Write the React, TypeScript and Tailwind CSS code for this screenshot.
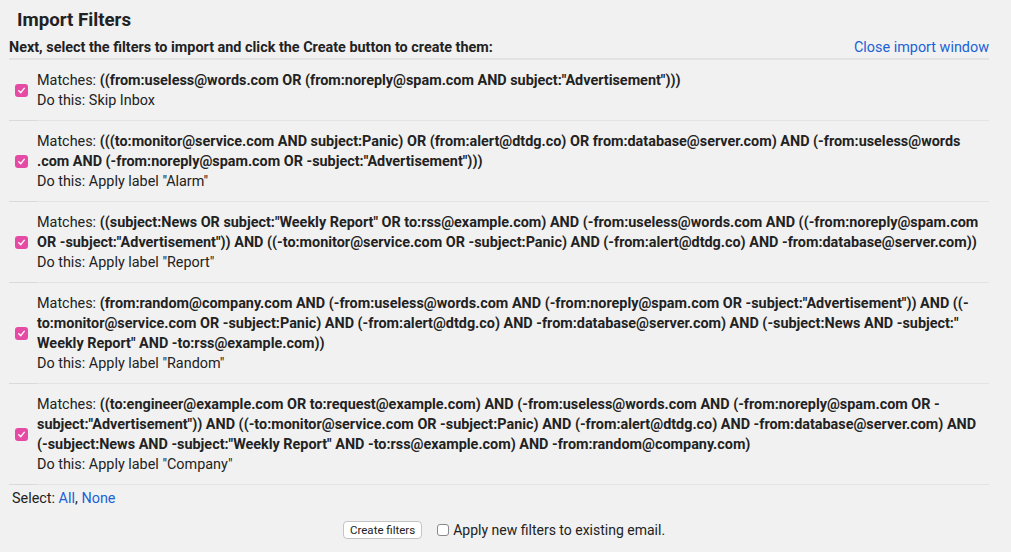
import React from "react";

type Filter = {
  lines: string[];
  action: string;
};

const filters: Filter[] = [
  {
    lines: [`((from:useless@words.com OR (from:noreply@spam.com AND subject:"Advertisement")))`],
    action: "Skip Inbox",
  },
  {
    lines: [
      `(((to:monitor@service.com AND subject:Panic) OR (from:alert@dtdg.co) OR from:database@server.com) AND (-from:useless@words`,
      `.com AND (-from:noreply@spam.com OR -subject:"Advertisement")))`,
    ],
    action: `Apply label "Alarm"`,
  },
  {
    lines: [
      `((subject:News OR subject:"Weekly Report" OR to:rss@example.com) AND (-from:useless@words.com AND ((-from:noreply@spam.com`,
      `OR -subject:"Advertisement")) AND ((-to:monitor@service.com OR -subject:Panic) AND (-from:alert@dtdg.co) AND -from:database@server.com))`,
    ],
    action: `Apply label "Report"`,
  },
  {
    lines: [
      `(from:random@company.com AND (-from:useless@words.com AND (-from:noreply@spam.com OR -subject:"Advertisement")) AND ((-`,
      `to:monitor@service.com OR -subject:Panic) AND (-from:alert@dtdg.co) AND -from:database@server.com) AND (-subject:News AND -subject:"`,
      `Weekly Report" AND -to:rss@example.com))`,
    ],
    action: `Apply label "Random"`,
  },
  {
    lines: [
      `((to:engineer@example.com OR to:request@example.com) AND (-from:useless@words.com AND (-from:noreply@spam.com OR -`,
      `subject:"Advertisement")) AND ((-to:monitor@service.com OR -subject:Panic) AND (-from:alert@dtdg.co) AND -from:database@server.com) AND`,
      `(-subject:News AND -subject:"Weekly Report" AND -to:rss@example.com) AND -from:random@company.com)`,
    ],
    action: `Apply label "Company"`,
  },
];

function PinkCheck() {
  return (
    <span className="flex h-[13px] w-[13px] items-center justify-center rounded-[3px] bg-[#e54aa5]">
      <svg width="9" height="9" viewBox="0 0 10 10" fill="none">
        <path d="M2 5.3 L4.2 7.4 L8 2.6" stroke="white" strokeWidth="1.6" strokeLinecap="round" strokeLinejoin="round" />
      </svg>
    </span>
  );
}

function FilterRow({ f }: { f: Filter }) {
  return (
    <div className="flex">
      <div className="flex w-[28px] shrink-0 items-center justify-end border-b border-[#dadada] pr-[9px]">
        <PinkCheck />
      </div>
      <div className="flex-1 whitespace-nowrap border-b border-[#e4e4e4] pt-[11px] pb-[9px]">
        <div>
          Matches:{" "}
          <b className="font-bold">
            {f.lines.map((l, i) => (
              <React.Fragment key={i}>
                {i > 0 && <br />}
                {l}
              </React.Fragment>
            ))}
          </b>
        </div>
        <div>Do this: {f.action}</div>
      </div>
    </div>
  );
}

export default function App() {
  return (
    <div
      className="min-h-[552px] w-[1011px] bg-[#f1f1f1] pl-[9px] pr-[22px] text-[14.4px] leading-[20px] text-[#222]"
      style={{ fontFamily: "Roboto, 'Liberation Sans', sans-serif" }}
    >
      <h1 className="pl-[8px] pt-[8px] text-[18.7px] font-bold leading-[24px] text-[#222]">Import Filters</h1>
      <div className="mt-[6px] flex items-center justify-between border-b-2 border-[#e3e3e3] pb-0">
        <span className="font-bold">Next, select the filters to import and click the Create button to create them:</span>
        <a className="text-[#1a62d6]">Close import window</a>
      </div>
      {filters.map((f, i) => (
        <FilterRow key={i} f={f} />
      ))}
      <div className="mt-[4px] pl-[3px]">
        Select: <a className="text-[#1a62d6]">All</a>, <a className="text-[#1a62d6]">None</a>
      </div>
      <div className="mt-[11px] flex items-center pl-[334px]">
        <button className="h-[18px] rounded-[4px] border border-[#c4c4c4] bg-white px-[6px] text-[11.5px] leading-[16px] text-[#222]">
          Create filters
        </button>
        <label className="ml-[15px] flex items-center gap-[4px] text-[14px]">
          <span className="h-[12px] w-[12px] rounded-[3px] border border-[#8a8a8a] bg-white" />
          <span>Apply new filters to existing email.</span>
        </label>
      </div>
    </div>
  );
}
